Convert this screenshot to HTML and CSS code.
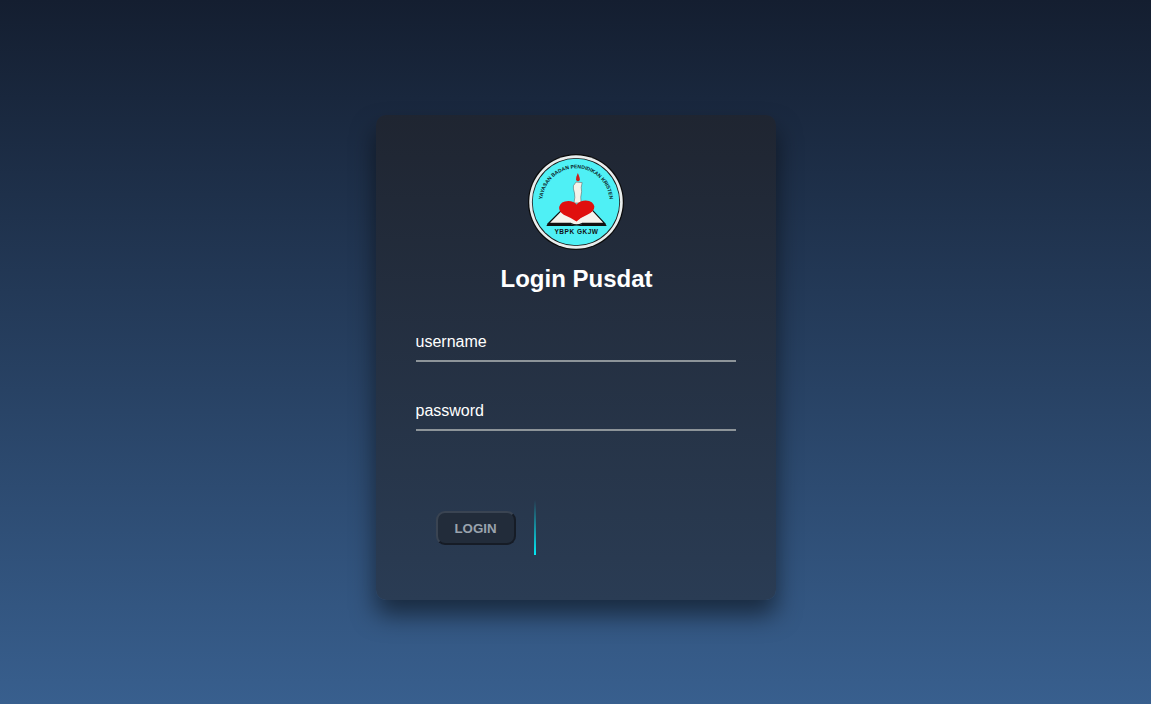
FILE: index.html
```html
<!DOCTYPE html>
<html lang="id">
<head>
<meta charset="utf-8">
<title>Login Pusdat</title>
<link rel="stylesheet" href="styles.css">
</head>
<body>
<main class="login-box">
  <div class="logo-wrap">
    <svg class="logo" viewBox="0 0 94 94" width="96" height="96" role="img" aria-label="YBPK GKJW">
      <defs>
        <path id="arc" d="M14 47 A33 33 0 1 1 80 47"/>
      </defs>
      <circle cx="47" cy="47" r="47" fill="#0b0b0b"/>
      <circle cx="47" cy="47" r="45.8" fill="#e9eded"/>
      <circle cx="47" cy="47" r="43.2" fill="#1a1a1a"/>
      <circle cx="47" cy="47" r="42.4" fill="#4ff0f5"/>
      <text class="logo-arc"><textPath href="#arc" startOffset="50%" text-anchor="middle">YAYASAN BADAN PENDIDIKAN KRISTEN</textPath></text>
      <path d="M44.5 31 Q46 29 47 27.5 L53 28 Q51.5 33 52.5 37 Q51 42 52 48 L45 48 Q46.5 42 45.5 38 Q44 34 44.5 31 Z" fill="#f6f3ea" stroke="#555" stroke-width=".5"/>
      <path d="M48.8 18.5 Q51 23.5 50.8 25.5 Q49 28 47 25.5 Q46.6 23 48.8 18.5 Z" fill="#d01f1b"/>
      <path d="M33 55 L20 68 L42 68 Q47.5 71 53 68 L75 68 L63 55 L47.5 64 Z" fill="#f6f4ee" stroke="#111" stroke-width="1.2"/>
      <path d="M47.5 66 Q41 62 35 59.5 Q30 56.5 30.5 52 Q32 46 39.5 46 Q45 46 47.5 49.5 Q51 45.5 56.5 45.5 Q64 46 65 51.5 Q65 56.5 58 59.5 Q52 62 47.5 66 Z" fill="#e0100e"/>
      <path d="M19 68.5 L42 68.5 Q47.5 72 53 68.5 L76 68.5 L77 70.5 L18 70.5 Z" fill="#111"/>
      <text class="logo-name" x="47.5" y="78" text-anchor="middle">YBPK GKJW</text>
    </svg>
  </div>
  <h2 class="title">Login Pusdat</h2>
  <form class="form">
    <div class="field"><input class="input" type="text" placeholder="username"></div>
    <div class="field"><input class="input" type="password" placeholder="password"></div>
    <div class="actions">
      <button class="btn" type="button">LOGIN</button>
      <span class="glow"></span>
    </div>
  </form>
</main>
</body>
</html>
```

FILE: styles.css
```css
* { box-sizing: border-box; }
html, body { height: 100%; }
body {
  margin: 0;
  height: 704px;
  overflow: hidden;
  font-family: "Liberation Sans", Arial, sans-serif;
  background: linear-gradient(#141e30, #385f8e);
  display: flex;
  justify-content: center;
  align-items: flex-start;
  padding-top: 115px;
}
.login-box {
  width: 400px;
  height: 485px;
  padding: 40px;
  border-radius: 10px;
  background: linear-gradient(#1f2531, #2a3c54);
  box-shadow: 0 15px 25px rgba(0, 0, 0, .5);
}
.logo-wrap { display: flex; justify-content: center; height: 96px; margin-top: -1px; }
.logo { display: block; flex: none; }
.logo-arc { font: bold 5px "Liberation Sans", Arial, sans-serif; fill: #0c2226; }
.logo-name { font: bold 6.4px "Liberation Sans", Arial, sans-serif; fill: #111; letter-spacing: .5px; }
.title {
  margin: 15px 0 0;
  height: 28px;
  padding-left: 2px;
  font-size: 24px;
  line-height: 28px;
  font-weight: 700;
  color: #fff;
  text-align: center;
}
.form { margin-top: 29px; }
.field { height: 69px; }
.input {
  display: block;
  width: 100%;
  height: 40px;
  padding: 11px 0 9px;
  font: 16px "Liberation Sans", Arial, sans-serif;
  color: #fff;
  background: transparent;
  border: 0;
  border-bottom: 2px solid #8d9499;
  outline: 0;
}
.input::placeholder { color: #fff; opacity: 1; }
.actions { position: relative; margin-top: 40px; padding: 11px 20px 0; height: 60px; display: flex; align-items: flex-start; }
.btn {
  width: 80px;
  height: 34px;
  padding: 0;
  font: bold 13.33px "Liberation Sans", Arial, sans-serif;
  color: #9aa3ad;
  background: #222c3a;
  border: 2px solid;
  border-color: #3a4452 #161c26 #161c26 #3a4452;
  border-radius: 9px;
}
.glow {
  position: absolute;
  left: 118px;
  top: 0;
  width: 2px;
  height: 55px;
  background: linear-gradient(180deg, transparent, #03e9f4);
}
```
